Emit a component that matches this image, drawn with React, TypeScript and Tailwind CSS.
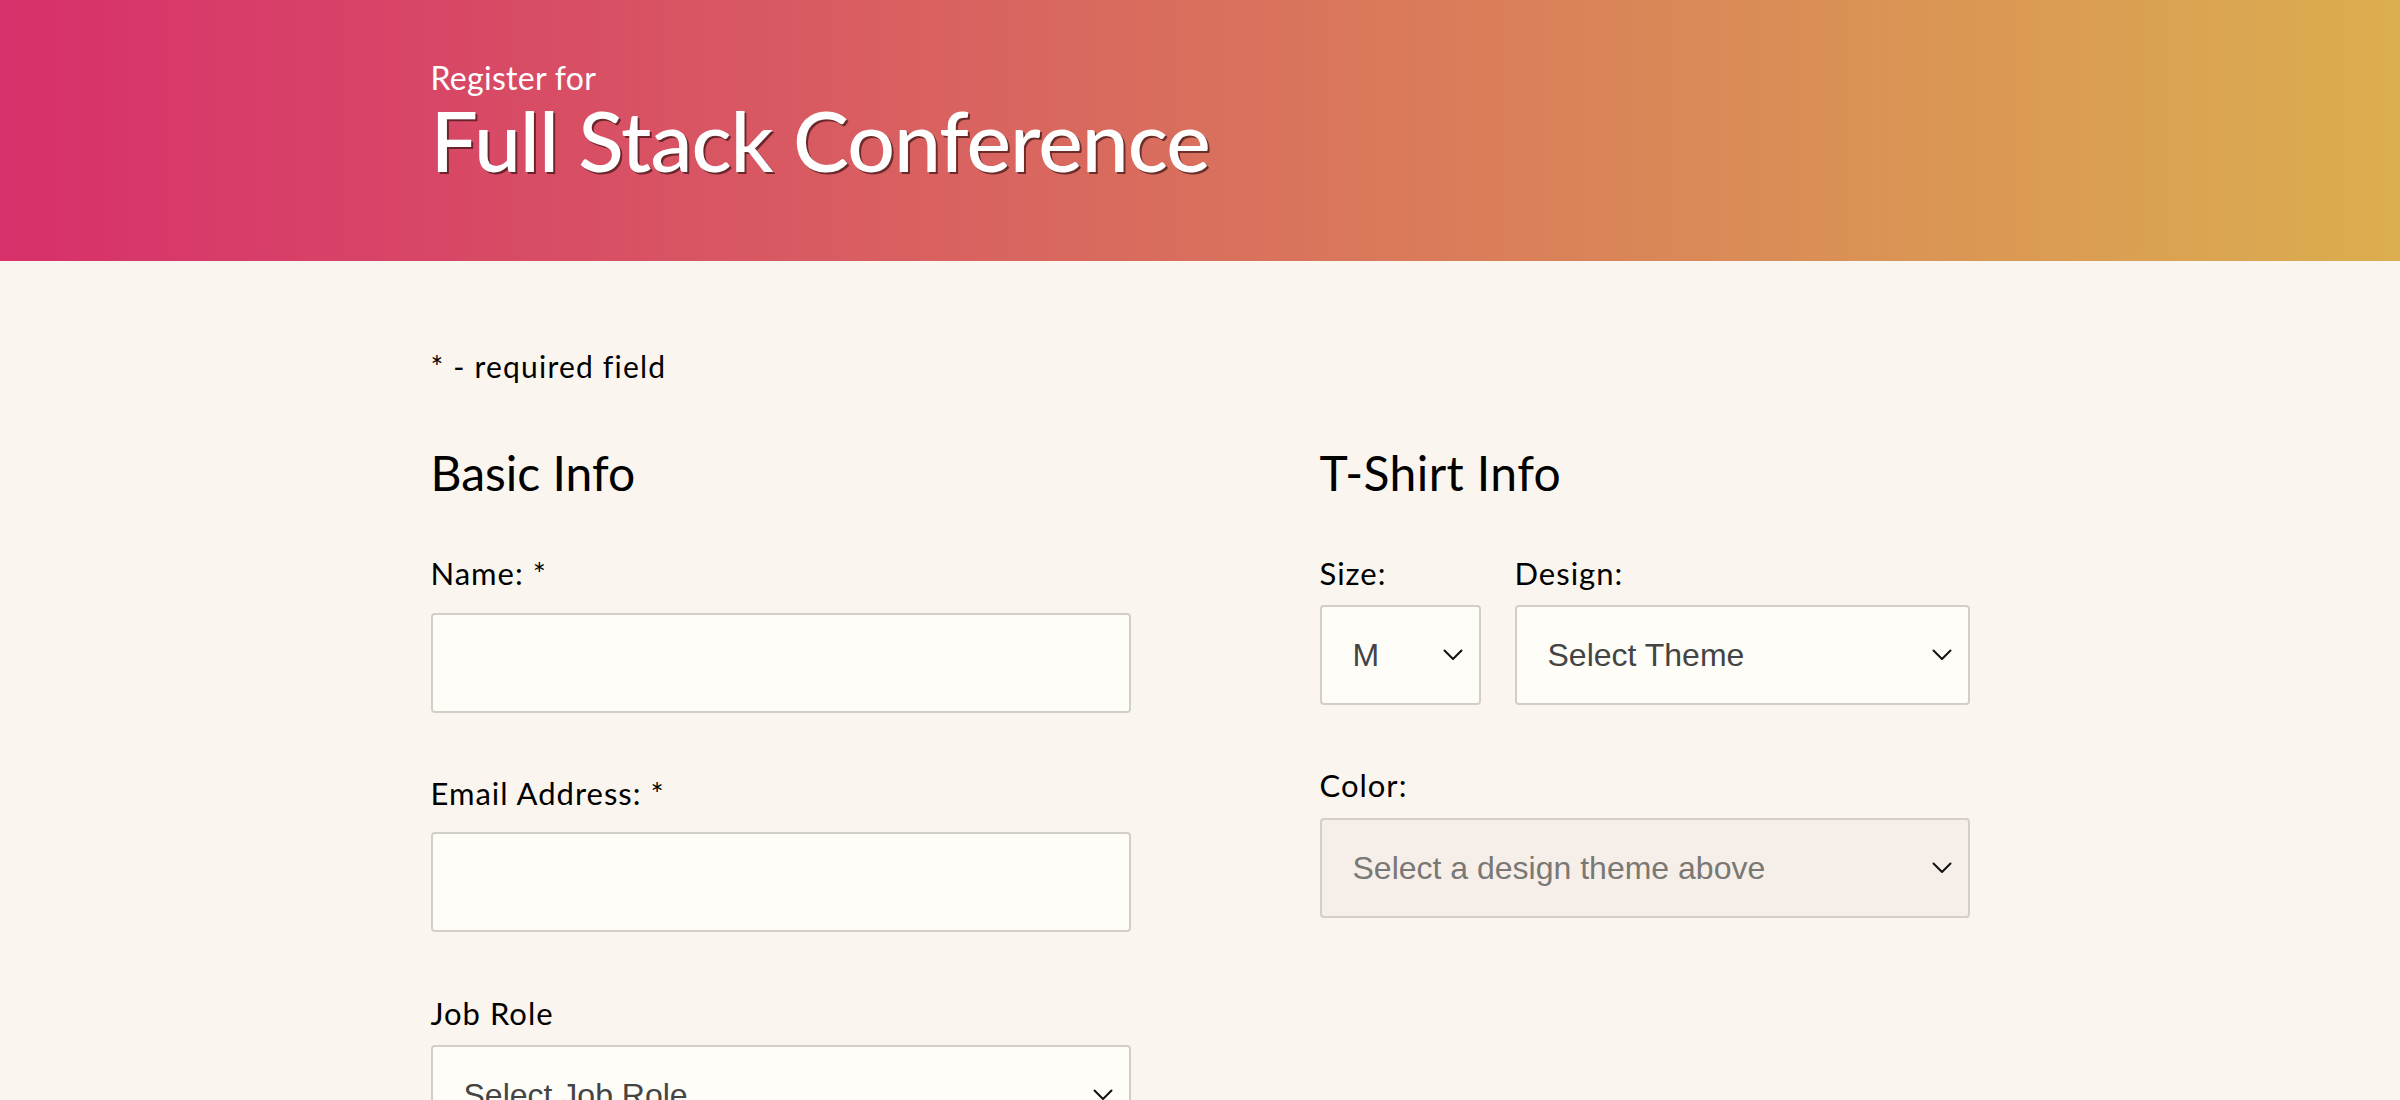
import React from 'react';

const Chevron = () => (
  <svg width="20" height="12" viewBox="0 0 20 12" fill="none" className="pointer-events-none absolute right-[18px] top-1/2 -translate-y-1/2">
    <polyline points="1.5,1.5 10,10 18.5,1.5" stroke="#111" strokeWidth="2" strokeLinecap="round" strokeLinejoin="round" />
  </svg>
);

const Select = ({ value, disabled, className = '' }: { value: string; disabled?: boolean; className?: string }) => (
  <div className={`relative ${className}`}>
    <select
      disabled={disabled}
      defaultValue={value}
      className={`h-[100px] w-full appearance-none rounded-[4px] border-2 border-[#d3cfc7] pl-[31px] pr-[50px] font-['Liberation_Sans',Arial,sans-serif] text-[32px] outline-none ${
        disabled ? 'bg-[#f6efe9] text-[#7a7874]' : 'bg-[#fefdf8] text-[#444]'
      }`}
    >
      <option value={value}>{value}</option>
    </select>
    <Chevron />
  </div>
);

const Label = ({ children, className = '' }: any) => (
  <label className={`block text-[31px] leading-[30px] tracking-[1px] text-black ${className}`}>{children}</label>
);

const TextInput = ({ className = '' }: { className?: string }) => (
  <input
    type="text"
    className={`block h-[100px] w-full rounded-[4px] border-2 border-[#d3cfc7] bg-[#fefdf8] px-[30px] text-[30px] outline-none ${className}`}
  />
);

export default function App() {
  return (
    <div className="min-h-screen bg-[#faf6ef] font-['Lato','Open_Sans',sans-serif] text-black">
      <header className="h-[261px] bg-[linear-gradient(to_right,#d7306b,#dbae4f)]">
        <div className="mx-auto w-[1539px] pt-[62px]">
          <p className="text-[32px] leading-[32px] tracking-[0.3px] text-white">Register for</p>
          <h1 className="mt-[4px] text-[84px] font-medium leading-[84px] tracking-[-1px] text-white [text-shadow:2px_2px_0_rgba(60,20,20,0.7)]">
            Full Stack Conference
          </h1>
        </div>
      </header>

      <main className="mx-auto w-[1539px] pt-[90px]">
        <p className="text-[30px] leading-[30px] tracking-[1.2px]">* - required field</p>

        <div className="mt-[68px] grid grid-cols-[700px_650px] justify-between">
          <section>
            <h2 className="text-[48px] leading-[48px]">Basic Info</h2>

            <Label className="mt-[61px]">Name: *</Label>
            <TextInput className="mt-[25px]" />

            <Label className="mt-[65px]">Email Address: *</Label>
            <TextInput className="mt-[24px]" />

            <Label className="mt-[66px]">Job Role</Label>
            <Select value="Select Job Role" className="mt-[17px]" />
          </section>

          <section>
            <h2 className="text-[48px] leading-[48px] tracking-[0.4px]">T-Shirt Info</h2>

            <div className="mt-[61px] flex gap-[34px]">
              <div className="w-[161px]">
                <Label>Size:</Label>
                <Select value="M" className="mt-[17px]" />
              </div>
              <div className="flex-1">
                <Label>Design:</Label>
                <Select value="Select Theme" className="mt-[17px]" />
              </div>
            </div>

            <Label className="mt-[65px]">Color:</Label>
            <Select value="Select a design theme above" disabled className="mt-[18px]" />
          </section>
        </div>
      </main>
    </div>
  );
}
